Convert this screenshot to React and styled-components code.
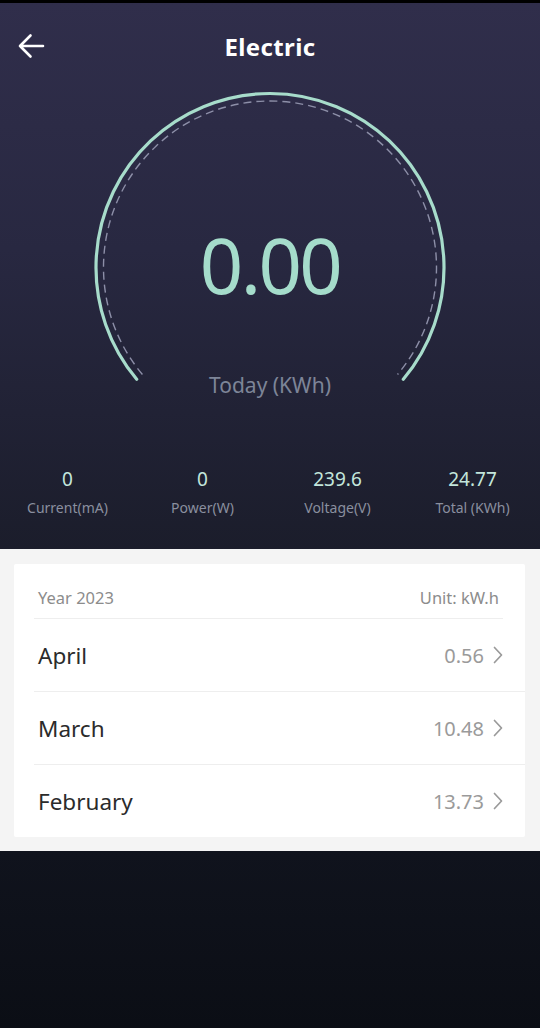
import styled, { createGlobalStyle } from 'styled-components';

const GlobalStyle = createGlobalStyle`
  html, body {
    margin: 0;
    padding: 0;
    background: #0c0f16;
  }
  body {
    font-family: "Noto Sans", "Open Sans", sans-serif;
  }
`;

const Screen = styled.div`
  width: 540px;
  height: 1028px;
  display: flex;
  flex-direction: column;
  overflow: hidden;
`;

const StatusStrip = styled.div`
  height: 3px;
  background: #000;
`;

const Hero = styled.section`
  display: flex;
  flex-direction: column;
  height: 546px;
  background: linear-gradient(180deg, #302e4b 0%, #282841 45%, #1b1d2b 100%);
`;

const NavBar = styled.header`
  position: relative;
  height: 86px;
  display: flex;
  align-items: center;
  justify-content: center;
`;

const BackButton = styled.button`
  position: absolute;
  left: 17px;
  top: 29px;
  width: 28px;
  height: 28px;
  padding: 0;
  border: none;
  background: none;
  display: flex;
  align-items: center;
  justify-content: center;
`;

const Title = styled.h1`
  margin: 0;
  color: #fff;
  font-size: 24px;
  font-weight: 700;
  letter-spacing: 0.4px;
`;

const Gauge = styled.div`
  position: relative;
  height: 310px;
  display: flex;
  flex-direction: column;
  align-items: center;
  padding-top: 137px;
  box-sizing: border-box;
`;

const GaugeArt = styled.svg`
  position: absolute;
  inset: 0;
`;

const Reading = styled.div`
  position: relative;
  color: #a5dccb;
  font-family: "Noto Sans", sans-serif;
  font-size: 76px;
  line-height: 78px;
  letter-spacing: -2.6px;
`;

const ReadingLabel = styled.div`
  position: relative;
  margin-top: 69px;
  color: #7d8598;
  font-size: 21px;
  line-height: 24px;
`;

const Stats = styled.div`
  display: grid;
  grid-template-columns: repeat(4, 1fr);
  margin-top: 68px;
`;

const Stat = styled.div`
  display: flex;
  flex-direction: column;
  align-items: center;
  gap: 8px;
`;

const StatValue = styled.div`
  color: #c3e6dc;
  font-size: 19px;
  line-height: 24px;
`;

const StatLabel = styled.div`
  color: #8a8f9f;
  font-size: 14px;
  line-height: 18px;
`;

const Records = styled.section`
  background: #f4f4f4;
  padding: 15px 15px 14px 14px;
`;

const Card = styled.div`
  background: #fff;
  border-radius: 2px;
`;

const CardHeader = styled.div`
  height: 55px;
  margin: 0 22px 0 20px;
  padding: 0 4px;
  display: flex;
  align-items: flex-end;
  justify-content: space-between;
  padding-bottom: 9px;
  box-sizing: border-box;
  border-bottom: 1px solid #eeeeee;
  color: #8c8c8c;
  font-size: 16.5px;
  line-height: 22px;
`;

const Row = styled.div`
  height: 72px;
  margin-left: 20px;
  padding: 0 22px 0 4px;
  display: flex;
  align-items: center;
  justify-content: space-between;
  border-top: ${({ $first }) => ($first ? 'none' : '1px solid #eeeeee')};
`;

const Month = styled.span`
  color: #2b2b2b;
  font-size: 22.5px;
`;

const Amount = styled.span`
  display: flex;
  align-items: center;
  gap: 9px;
  color: #9a9a9a;
  font-size: 20px;
`;

const Footer = styled.div`
  flex: 1;
  background: linear-gradient(180deg, #10131d 0%, #0b0e15 100%);
`;

const stats = [
  { value: '0', label: 'Current(mA)' },
  { value: '0', label: 'Power(W)' },
  { value: '239.6', label: 'Voltage(V)' },
  { value: '24.77', label: 'Total (KWh)' },
];

const months = [
  { name: 'April', value: '0.56' },
  { name: 'March', value: '10.48' },
  { name: 'February', value: '13.73' },
];

function arcPath(cx, cy, r, deg) {
  const a = (deg * Math.PI) / 180;
  const dx = r * Math.cos(a);
  const dy = r * Math.sin(a);
  return `M ${cx - dx} ${cy + dy} A ${r} ${r} 0 1 1 ${cx + dx} ${cy + dy}`;
}

function Chevron() {
  return (
    <svg width="10" height="18" viewBox="0 0 10 18">
      <polyline
        points="1.5,1.5 8.5,9 1.5,16.5"
        fill="none"
        stroke="#9a9a9a"
        strokeWidth="1.7"
        strokeLinecap="round"
        strokeLinejoin="round"
      />
    </svg>
  );
}

function App() {
  return (
    <Screen>
      <GlobalStyle />
      <StatusStrip />
      <Hero>
        <NavBar>
          <BackButton aria-label="Back">
            <svg width="28" height="28" viewBox="0 0 28 28">
              <path
                d="M26 14H3M13.5 3.5 3 14l10.5 10.5"
                fill="none"
                stroke="#fff"
                strokeWidth="2.6"
                strokeLinecap="round"
                strokeLinejoin="round"
              />
            </svg>
          </BackButton>
          <Title>Electric</Title>
        </NavBar>
        <Gauge>
          <GaugeArt width="540" height="310" viewBox="0 0 540 310">
            <path
              d={arcPath(270, 178.5, 174, 40)}
              fill="none"
              stroke="#a7dccb"
              strokeWidth="3.2"
              strokeLinecap="round"
            />
            <path
              d={arcPath(270, 178.5, 166.5, 40)}
              fill="none"
              stroke="#8d8fa8"
              strokeWidth="1.4"
              strokeDasharray="8 5"
            />
          </GaugeArt>
          <Reading>0.00</Reading>
          <ReadingLabel>Today (KWh)</ReadingLabel>
        </Gauge>
        <Stats>
          {stats.map((s) => (
            <Stat key={s.label}>
              <StatValue>{s.value}</StatValue>
              <StatLabel>{s.label}</StatLabel>
            </Stat>
          ))}
        </Stats>
      </Hero>
      <Records>
        <Card>
          <CardHeader>
            <span>Year 2023</span>
            <span>Unit: kW.h</span>
          </CardHeader>
          {months.map((m, i) => (
            <Row key={m.name} $first={i === 0}>
              <Month>{m.name}</Month>
              <Amount>
                {m.value}
                <Chevron />
              </Amount>
            </Row>
          ))}
        </Card>
      </Records>
      <Footer />
    </Screen>
  );
}

export default App;
